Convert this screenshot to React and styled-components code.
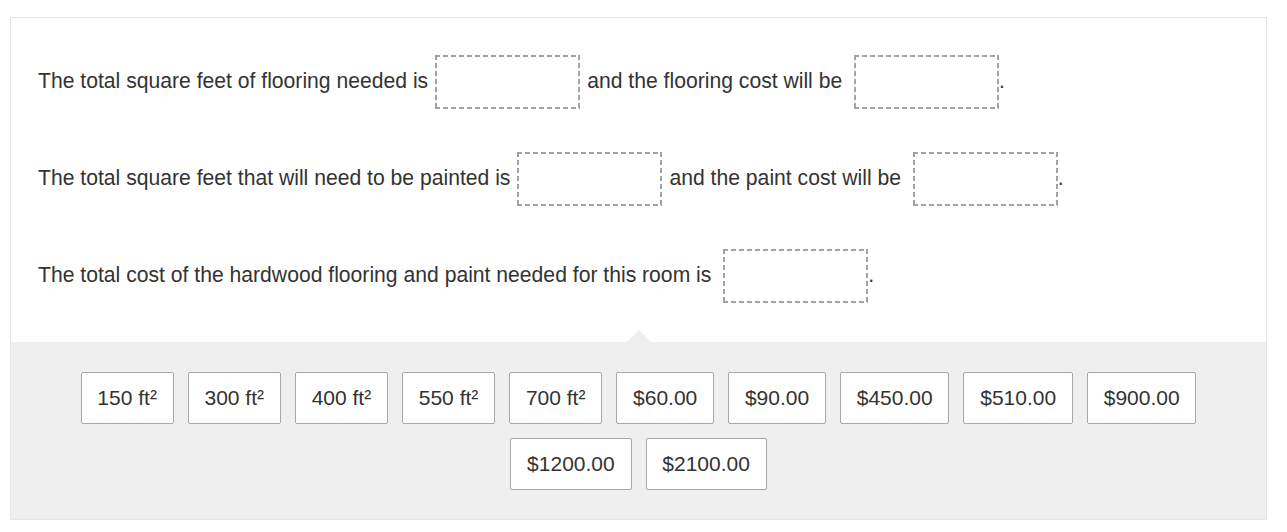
import React from 'react'
import styled, { createGlobalStyle } from 'styled-components'

const Global = createGlobalStyle`
  body {
    margin: 0;
    background: #fff;
    font-family: "Liberation Sans", Arial, sans-serif;
  }
`

const Frame = styled.div`
  width: 1255px;
  margin: 17px 0 0 10px;
  border: 1px solid #e6e6e6;
`

const Prompt = styled.div`
  display: flex;
  flex-direction: column;
  gap: 43px;
  padding: 36px 27px 40px;
  background: #fff;
`

const Line = styled.div`
  font-size: 21.15px;
  color: #333;
  white-space: pre;
  line-height: 54px;
  height: 54px;
`

const dashColor = '#a2a2a2'

const Blank = styled.span`
  display: inline-block;
  vertical-align: middle;
  box-sizing: border-box;
  width: 145px;
  height: 54px;
  margin: 0 ${(p) => (p.$end ? '0px' : '7px')} 0 ${(p) => (p.$end ? '6px' : '7px')};
  background:
    linear-gradient(to right, ${dashColor} 5px, transparent 5px) left top / 8px 2px repeat-x,
    linear-gradient(to right, ${dashColor} 5px, transparent 5px) left bottom / 8px 2px repeat-x,
    linear-gradient(to bottom, ${dashColor} 5px, transparent 5px) left top / 2px 8px repeat-y,
    linear-gradient(to bottom, ${dashColor} 5px, transparent 5px) right top / 2px 8px repeat-y;
`

const Tray = styled.div`
  position: relative;
  background: #efefef;
  padding: 30px 60px 29px;
  display: flex;
  flex-wrap: wrap;
  justify-content: center;
  gap: 14px;

  &::before {
    content: '';
    position: absolute;
    top: -12px;
    left: 50%;
    margin-left: -12px;
    border-left: 12px solid transparent;
    border-right: 12px solid transparent;
    border-bottom: 12px solid #efefef;
  }
`

const Chip = styled.button`
  font-family: "Liberation Sans", Arial, sans-serif;
  font-size: 21px;
  line-height: 24px;
  color: #333;
  background: #fff;
  border: 1px solid #a8a8a8;
  border-radius: 2px;
  padding: 13px 15.8px;
  cursor: pointer;
`

const choices = [
  '150 ft²', '300 ft²', '400 ft²', '550 ft²', '700 ft²',
  '$60.00', '$90.00', '$450.00', '$510.00', '$900.00',
  '$1200.00', '$2100.00',
]

export default function App() {
  return (
    <>
      <Global />
      <Frame>
        <Prompt>
          <Line>
            The total square feet of flooring needed is<Blank />and the flooring cost will be <Blank $end />.
          </Line>
          <Line>
            The total square feet that will need to be painted is<Blank />and the paint cost will be <Blank $end />.
          </Line>
          <Line>
            The total cost of the hardwood flooring and paint needed for this room is <Blank $end />.
          </Line>
        </Prompt>
        <Tray>
          {choices.map((c) => (
            <Chip key={c}>{c}</Chip>
          ))}
        </Tray>
      </Frame>
    </>
  )
}
